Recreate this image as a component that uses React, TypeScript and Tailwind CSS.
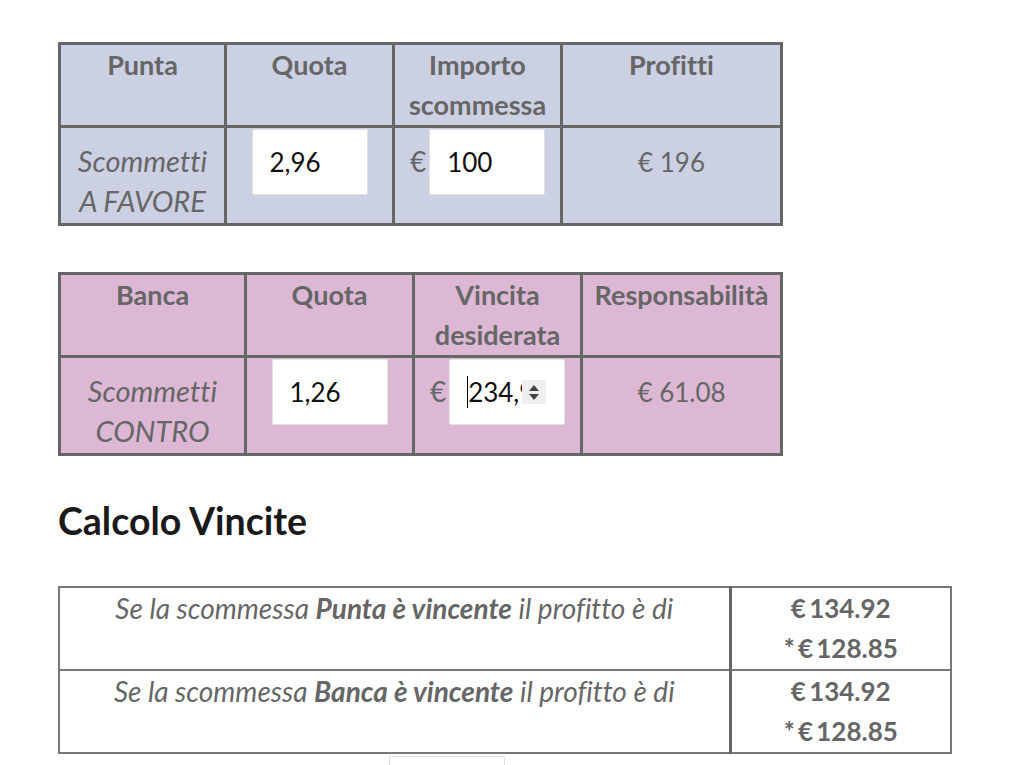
import React from 'react';

type BetRow = {
  title: string;
  headers: React.ReactNode[];
  label: [string, string];
  quota: string;
  amount: string;
  result: string;
  widths: string[];
  bg: string;
  spinner?: boolean;
};

const rows: BetRow[] = [
  {
    title: 'Punta',
    headers: ['Punta', 'Quota', <>Importo<br />scommessa</>, 'Profitti'],
    label: ['Scommetti', 'A FAVORE'],
    quota: '2,96',
    amount: '100',
    result: '€ 196',
    widths: ['w-[166px]', 'w-[168px]', 'w-[168px]', 'w-[220px]'],
    bg: 'bg-[#cbd0e3]',
  },
  {
    title: 'Banca',
    headers: ['Banca', 'Quota', <>Vincita<br />desiderata</>, 'Responsabilità'],
    label: ['Scommetti', 'CONTRO'],
    quota: '1,26',
    amount: '234,9',
    result: '€ 61.08',
    widths: ['w-[186px]', 'w-[168px]', 'w-[168px]', 'w-[200px]'],
    bg: 'bg-[#dcb8d4]',
    spinner: true,
  },
];

const cell = 'border-[3px] border-[#666] text-center';

function Field({ value, spinner, className = '' }: { value: string; spinner?: boolean; className?: string }) {
  if (spinner) {
    // number field with caret and stepper arrows
    return (
      <span className={`relative inline-block h-[66px] w-[116px] whitespace-nowrap rounded-[2px] border border-[#e2e2e2] bg-white pl-[17px] text-left align-baseline text-[26px] leading-[64px] text-[#111] ${className}`}>
        <span className="border-l-[1.5px] border-black">{value}</span>
        <span className="absolute right-[18px] top-[20px] flex h-[24px] w-[24px] flex-col items-center justify-center gap-[3px] bg-[#efefef]">
          <svg width="10" height="6" viewBox="0 0 10 6"><path d="M5 0 L10 6 H0 Z" fill="#444" /></svg>
          <svg width="10" height="6" viewBox="0 0 10 6"><path d="M0 0 H10 L5 6 Z" fill="#444" /></svg>
        </span>
      </span>
    );
  }
  return (
    <input
      readOnly
      value={value}
      className={`h-[66px] w-[116px] rounded-[2px] border border-[#e2e2e2] bg-white pl-[17px] align-baseline text-[26px] text-[#111] outline-none ${className}`}
    />
  );
}

function BetTable({ row }: { row: BetRow }) {
  return (
    <table className={`w-[722px] table-fixed border-collapse ${row.bg} text-[#666]`}>
      <colgroup>
        {row.widths.map((w, i) => (
          <col key={i} className={w} />
        ))}
      </colgroup>
      <thead>
        <tr>
          {row.headers.map((h, i) => (
            <th key={i} className={`${cell} h-[83px] px-0 align-top text-[27px] font-bold`}>
              {h}
            </th>
          ))}
        </tr>
      </thead>
      <tbody>
        <tr className="h-[98px]">
          <td className={`${cell} align-baseline text-[29px] italic`}>
            {row.label[0]}
            <br />
            {row.label[1]}
          </td>
          <td className={`${cell} align-baseline pt-[1px]`}>
            <Field value={row.quota} />
          </td>
          <td className={`${cell} align-baseline pt-[1px] whitespace-nowrap`}>
            €<Field value={row.amount} spinner={row.spinner} className="ml-[3px]" />
          </td>
          <td className={`${cell} align-baseline text-[26px]`}>{row.result}</td>
        </tr>
      </tbody>
    </table>
  );
}

const outcomes = [
  { side: 'Punta', first: '€\u2009134.92', second: '*\u2009€\u2009128.85' },
  { side: 'Banca', first: '€\u2009134.92', second: '*\u2009€\u2009128.85' },
];

export default function App() {
  return (
    <div className="h-[765px] overflow-hidden bg-white pl-[58px] pt-[42px] font-['Lato',sans-serif] text-[28px] leading-[40px] [font-variant-ligatures:none]">
      <div className="flex flex-col gap-[46px]">
        {rows.map((row) => (
          <BetTable key={row.title} row={row} />
        ))}
      </div>

      <h2 className="mt-[42px] text-[37.5px] font-bold leading-[46px] text-[#1a1a1a]">Calcolo Vincite</h2>

      <table className="mt-[42px] w-[892px] table-fixed border-collapse bg-white text-[#666]">
        <colgroup>
          <col className="w-[671px]" />
          <col className="w-[221px]" />
        </colgroup>
        <tbody>
          {outcomes.map((o) => (
            <tr key={o.side} className="h-[83px]">
              <td className="border-2 border-[#777] border-r-[3px] border-r-[#666] text-center align-top italic">
                Se la scommessa <b>{o.side} è vincente</b> il profitto è di
              </td>
              <td className="border-2 border-[#777] border-l-[3px] border-l-[#666] text-center align-top text-[26px] font-bold">
                {o.first}
                <br />
                {o.second}
              </td>
            </tr>
          ))}
        </tbody>
      </table>

      <div className="ml-[331px] mt-[2px] h-[40px] w-[116px] rounded-t-[2px] border border-[#ddd] bg-white" />
    </div>
  );
}
